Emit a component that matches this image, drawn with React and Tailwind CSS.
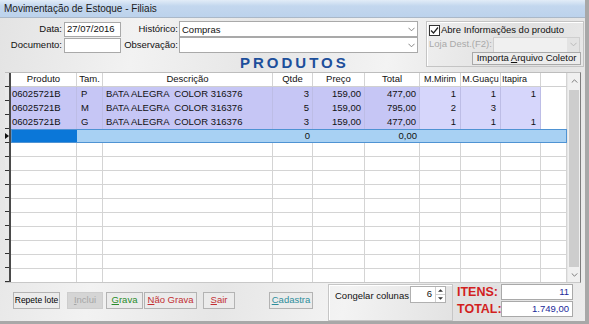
import React from 'react';

const cols = [
    { w: 'w-[66px]', head: 'Produto', ha: 'justify-center', da: 'justify-start pl-[1px]', tone: 'a' },
    { w: 'w-[26px]', head: 'Tam.', ha: 'justify-center', da: 'justify-start pl-[4px]', tone: 'a' },
    { w: 'w-[170px]', head: 'Descrição', ha: 'justify-center', da: 'justify-start pl-[3px]', tone: 'a' },
    { w: 'w-[40px]', head: 'Qtde', ha: 'justify-center', da: 'justify-end pr-[3px]', tone: 'a' },
    { w: 'w-[52px]', head: 'Preço', ha: 'justify-center', da: 'justify-end pr-[3px]', tone: 'a' },
    { w: 'w-[55px]', head: 'Total', ha: 'justify-center', da: 'justify-end pr-[3px]', tone: 'a' },
    { w: 'w-[41px]', head: 'M.Mirim', ha: 'justify-center text-[9px]', da: 'justify-end pr-[4px]', tone: 'b' },
    { w: 'w-[40px]', head: 'M.Guaçu', ha: 'justify-center text-[9px]', da: 'justify-end pr-[4px]', tone: 'b' },
    { w: 'w-[40px]', head: 'Itapira', ha: 'justify-start pl-[1px] text-[9px]', da: 'justify-end pr-[4px]', tone: 'b' },
    { w: 'w-[26px]', head: '', ha: 'justify-center', da: 'justify-end', tone: 'w' },
];

const desc = 'BATA ALEGRA  COLOR 316376';
const rows = [
    ['06025721B', 'P', desc, '3', '159,00', '477,00', '1', '1', '1', ''],
    ['06025721B', 'M', desc, '5', '159,00', '795,00', '2', '3', '', ''],
    ['06025721B', 'G', desc, '3', '159,00', '477,00', '1', '1', '1', ''],
];
const current = ['', '', '', '0', '', '0,00', '', '', '', ''];
const emptyCount = 10;

const toneBg = { a: 'bg-[#c6c6f5]', b: 'bg-[#d6d6fb]', w: 'bg-white' };

function Chevron({ className = '' }) {
    return (
        <svg viewBox="0 0 8 5" className={className} fill="none" stroke="currentColor" strokeWidth="1">
            <path d="M0.5 0.5 L4 4 L7.5 0.5" />
        </svg>
    );
}

function Combo({ w, disabled }) {
    return (
        <div className={`${w} h-[16px] flex border ${disabled ? 'border-[#cfcfcf] bg-[#f0f0f0]' : 'border-[#a9a9a9] bg-white'}`}>
            <div className="flex-1" />
            <div className={`w-[12px] flex items-center justify-center ${disabled ? 'bg-[#e3e3e3] text-[#b5b5b5]' : 'text-[#777]'}`}>
                <Chevron className="w-[7px] h-[5px]" />
            </div>
        </div>
    );
}

function Btn({ w, children, color = 'text-black', disabled }) {
    return (
        <div
            className={`${w} h-[17px] flex items-center justify-center border ${
                disabled ? 'border-[#cdcdcd] bg-[#d5d5d5] text-[#a6a6a6]' : 'border-[#b3b3b3] bg-[#ebebeb] ' + color
            }`}
        >
            {children}
        </div>
    );
}

function Tick({ marker }) {
    return (
        <div className="h-[14px] flex flex-col justify-end relative">
            {marker && (
                <svg viewBox="0 0 4 6" className="absolute left-0 top-[4px] w-[4px] h-[6px]">
                    <path d="M0 0 L4 3 L0 6 Z" fill="#111" />
                </svg>
            )}
            <div className="w-[4px] h-[1px] bg-[#333]" />
        </div>
    );
}

export default function App() {
    return (
        <div className="w-[589px] h-[324px] overflow-hidden flex flex-col font-['Liberation_Sans',Arial,sans-serif] text-[9.5px] text-[#111] bg-[linear-gradient(100deg,#e3e3e3_0%,#f2f2f2_22%,#e6e6e6_42%,#f3f3f3_62%,#e0e0e0_82%,#ececec_100%)] border-r-[4px] border-b-[3px] border-[#a8a8a8]">
            {/* title */}
            <div className="h-[18px] shrink-0 flex items-center pl-[4px] text-[10px] text-[#1b1b1b] bg-[linear-gradient(180deg,#e2ecf7_0%,#c3d7ee_35%,#bcd2ec_100%)] border-b border-[#aab8c8]">
                Movimentação de Estoque - Filiais
            </div>

            {/* header form */}
            <div className="h-[54px] shrink-0 flex">
                <div className="w-[425px] pt-[3px]">
                    <div className="flex items-center h-[16px]">
                        <div className="w-[64px] text-right pr-[2px]">Data:</div>
                        <div className="w-[57px] h-[15px] border border-[#a9a9a9] bg-white flex items-center pl-[2px]">27/07/2016</div>
                        <div className="w-[58px] text-right pr-[1px]">Histórico:</div>
                        <div className="relative">
                            <Combo w="w-[239px]" />
                            <div className="absolute left-[3px] top-[2px]">Compras</div>
                        </div>
                    </div>
                    <div className="flex items-center h-[16px]">
                        <div className="w-[64px] text-right pr-[2px]">Documento:</div>
                        <div className="w-[57px] h-[15px] border border-[#a9a9a9] bg-white" />
                        <div className="w-[58px] text-right pr-[1px]">Observação:</div>
                        <Combo w="w-[239px]" />
                    </div>
                    <div className="pl-[240px] pt-[1px] text-[15px] leading-[18px] font-bold tracking-[3px] text-[#1d4f9b]">
                        PRODUTOS
                    </div>
                </div>
                <div className="ml-[1px] mt-[3px] w-[158px] h-[46px] border border-[#c4c4c4] shadow-[inset_1px_1px_0_#fff] px-[2px] pt-[2px] whitespace-nowrap text-[9px]">
                    <div className="flex items-center h-[12px]">
                        <div className="w-[11px] h-[11px] border border-[#333] bg-white flex items-center justify-center">
                            <svg viewBox="0 0 9 9" className="w-[9px] h-[9px]" fill="none" stroke="#222" strokeWidth="1.2">
                                <path d="M1 4.5 L3.5 7 L8 1.5" />
                            </svg>
                        </div>
                        <span className="ml-[1px] text-[9.5px]">Abre Informações do produto</span>
                    </div>
                    <div className="flex items-center h-[15px] mt-[1px]">
                        <span className="text-[#a9a9a9] w-[64px] text-[9.5px]">Loja Dest.(F2):</span>
                        <Combo w="w-[87px]" disabled />
                    </div>
                    <div className="flex justify-end">
                        <div className="w-[109px] h-[13px] border border-[#a9a9a9] bg-[#ececec] flex items-center justify-center text-[9.5px]">
                            Importa <span className="underline ml-[2px]">A</span>rquivo Coletor
                        </div>
                    </div>
                </div>
            </div>

            {/* grid */}
            <div className="ml-[5px] w-[576px] h-[211px] shrink-0 flex overflow-hidden border-t border-r border-b border-t-[#bdbdbd] border-r-[#7d7d7d] border-b-[#c8c8c8] bg-white">
                <div className="w-[6px] shrink-0 border-r-2 border-[#4a4a4a] bg-[#e9e9e9] flex flex-col">
                    <Tick />
                    {rows.map((_, i) => <Tick key={i} />)}
                    <Tick marker />
                    {Array.from({ length: emptyCount }).map((_, i) => <Tick key={'e' + i} />)}
                </div>
                <div className="w-[556px] shrink-0 flex flex-col">
                    <div className="flex h-[14px] shrink-0 border-b border-[#d0d0d0] bg-white">
                        {cols.map((c, i) => (
                            <div key={i} className={`${c.w} shrink-0 flex items-center border-r border-[#d4d4d4] ${c.ha}`}>
                                {c.head}
                            </div>
                        ))}
                    </div>
                    {rows.map((r, ri) => (
                        <div key={ri} className="flex h-[14px] shrink-0">
                            {cols.map((c, i) => (
                                <div
                                    key={i}
                                    className={`${c.w} shrink-0 flex items-center whitespace-pre border-r ${toneBg[c.tone]} ${
                                        c.tone === 'w' ? 'border-[#d4d4d4]' : 'border-[#bdbde6]'
                                    } ${c.da}`}
                                >
                                    {r[i]}
                                </div>
                            ))}
                        </div>
                    ))}
                    <div className="flex h-[14px] shrink-0 border border-[#4f93d3] bg-[#a8d1f3]">
                        {cols.map((c, i) => (
                            <div
                                key={i}
                                className={`${i === 0 ? 'w-[65px] bg-[#0b77d8]' : i === cols.length - 1 ? 'w-[25px]' : c.w} shrink-0 flex items-center ${c.da}`}
                            >
                                {current[i]}
                            </div>
                        ))}
                    </div>
                    {Array.from({ length: emptyCount }).map((_, ri) => (
                        <div key={ri} className="flex h-[14px] shrink-0 border-b border-[#d4d4d4]">
                            {cols.map((c, i) => (
                                <div key={i} className={`${c.w} shrink-0 border-r border-[#d4d4d4]`} />
                            ))}
                        </div>
                    ))}
                </div>
                <div className="w-[13px] shrink-0 flex flex-col bg-[#f0f0f0] border-l border-[#e6e6e6]">
                    <div className="h-[15px] flex items-center justify-center text-[#606060]">
                        <Chevron className="w-[7px] h-[4px] rotate-180" />
                    </div>
                    <div className="mx-[1px] mt-[2px] h-[177px] bg-[#cdcdcd]" />
                    <div className="flex-1" />
                    <div className="h-[14px] flex items-center justify-center text-[#606060]">
                        <Chevron className="w-[7px] h-[4px]" />
                    </div>
                </div>
            </div>

            {/* footer */}
            <div className="flex-1 flex">
                <div className="flex items-start pt-[9px] pl-[13px]">
                    <Btn w="w-[47px]"><span className="text-[8.5px]">Repete lote</span></Btn>
                    <div className="ml-[7px]">
                        <Btn w="w-[36px]" disabled><span><span className="underline">I</span>nclui</span></Btn>
                    </div>
                    <div className="ml-[3px]">
                        <Btn w="w-[37px]" color="text-[#2a8c2a]"><span><span className="underline">G</span>rava</span></Btn>
                    </div>
                    <div className="ml-[1px]">
                        <Btn w="w-[53px]" color="text-[#c22f33]"><span><span className="underline">N</span>ão Grava</span></Btn>
                    </div>
                    <div className="ml-[6px]">
                        <Btn w="w-[32px]" color="text-[#c22f33]"><span><span className="underline">S</span>air</span></Btn>
                    </div>
                    <div className="ml-[34px]">
                        <Btn w="w-[44px]" color="text-[#2e8e9c]"><span><span className="underline">C</span>adastra</span></Btn>
                    </div>
                </div>
                <div className="ml-[15px] mt-[1px] w-[125px] h-[37px] border border-[#c6c6c6] shadow-[inset_1px_1px_0_#fff] flex items-start pl-[6px] pt-[1px]">
                    <span className="mt-[3px]">Congelar colunas</span>
                    <div className="ml-[1px] w-[36px] h-[17px] border border-[#b0b0b0] bg-white flex">
                        <div className="flex-1 flex items-center justify-end pr-[3px]">6</div>
                        <div className="w-[10px] flex flex-col border-l border-[#d0d0d0]">
                            <div className="flex-1 flex items-center justify-center border-b border-[#d0d0d0]">
                                <svg viewBox="0 0 6 3" className="w-[5px] h-[3px]"><path d="M0 3 L3 0 L6 3 Z" fill="#333" /></svg>
                            </div>
                            <div className="flex-1 flex items-center justify-center">
                                <svg viewBox="0 0 6 3" className="w-[5px] h-[3px]"><path d="M0 0 L3 3 L6 0 Z" fill="#333" /></svg>
                            </div>
                        </div>
                    </div>
                </div>
                <div className="ml-[4px] mt-[1px] flex flex-col gap-[1px]">
                    <div className="flex items-center h-[16px]">
                        <span className="w-[44px] text-[12.5px] font-bold text-[#d21f1f]">ITENS:</span>
                        <div className="w-[72px] h-[16px] border border-[#a9a9a9] bg-white flex items-center justify-end pr-[3px] text-[#1c2a9a]">11</div>
                    </div>
                    <div className="flex items-center h-[16px]">
                        <span className="w-[44px] text-[12.5px] font-bold text-[#d21f1f]">TOTAL:</span>
                        <div className="w-[72px] h-[16px] border border-[#a9a9a9] bg-white flex items-center justify-end pr-[3px] text-[#1c2a9a]">1.749,00</div>
                    </div>
                </div>
            </div>
        </div>
    );
}
